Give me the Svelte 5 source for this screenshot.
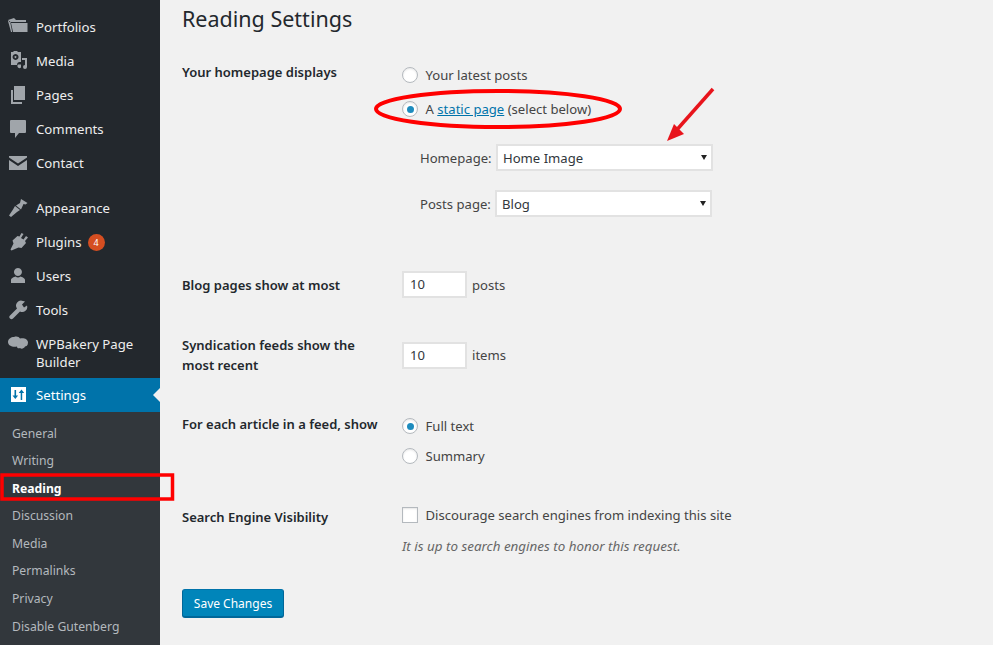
<script>
  const top = [
    { label: 'Portfolios', icon: 'folder' },
    { label: 'Media', icon: 'media' },
    { label: 'Pages', icon: 'pages' },
    { label: 'Comments', icon: 'comment' },
    { label: 'Contact', icon: 'mail' }
  ];
  const second = [
    { label: 'Appearance', icon: 'brush' },
    { label: 'Plugins', icon: 'plug', badge: '4' },
    { label: 'Users', icon: 'user' },
    { label: 'Tools', icon: 'wrench' }
  ];
  const paths = {
    folder: 'M0 3 L6 1 L8 3 H18 V5 H3 L2.5 6 Z M3 6 H19.5 V15 H5 Z M0 4 L2 4 L4 14 L4 15 L3 15 Z',
    media: 'M3 1 h2 l1 -1 h3 l1 1 h3 v10 h-2 a3 3 0 0 0 -2 3 h-6 z M7.5 3 a3 3 0 1 0 0.1 0 z M7.5 5 a1 1 0 1 1 -0.1 0 z M14 7 h5 v9 a2 2 0 1 1 -2 -2 v-5 h-3 z M10 13.5 h3 v3 a2 2 0 1 1 -3 -3 z',
    pages: 'M6 1 h11 v14 h-11 z M3 5 h2 v12 h9 v2 h-11 z',
    comment: 'M3 1 h14 a1 1 0 0 1 1 1 v11 a1 1 0 0 1 -1 1 h-6 l-4 5 v-5 h-4 a1 1 0 0 1 -1 -1 v-11 a1 1 0 0 1 1 -1 z',
    mail: 'M1 3 h18 v1.5 l-9 6 l-9 -6 z M1 7 l9 6 l9 -6 v10 h-18 z',
    brush: 'M13 1 l6.5 4 l-2 1.5 l-2 -.5 l-2.5 5.5 l-5 -4 l4 -2.5 z M7 8 l5 4 l-3 2 l-6 5 l-2 -1.5 l4 -6 z',
    plug: 'M13.5 1 l2 1 l-2.5 4 l2.5 1.5 l2.5 -3.5 l2 1.5 l-3 3.5 l1 2 l-4.5 5 l-3 -.5 l-7 3 l-1 -1 l3 -6 l-1 -3 l5 -4.5 l2 .5 z',
    user: 'M10 2 a4 4 0 1 1 -0.1 0 z M3 17 v-3 c0 -2 3 -3 4.5 -3.5 a4 4 0 0 0 5 0 c1.5 .5 4.5 1.5 4.5 3.5 v3 z',
    wrench: 'M15 1 a5 5 0 0 1 2 0.5 l-3 3 l2 3 l3 -2 a5 5 0 0 1 -7 6 l-7 7 a2 2 0 0 1 -3 -3 l7 -7 a5 5 0 0 1 6 -7.5 z'
  };
  const sub = ['General', 'Writing', 'Reading', 'Discussion', 'Media', 'Permalinks', 'Privacy', 'Disable Gutenberg'];
</script>

{#snippet item(entry)}
  <li class="item">
    <svg class="ico" viewBox="0 0 20 20"><path fill-rule="evenodd" d={paths[entry.icon]} /></svg>
    <span>{entry.label}</span>
    {#if entry.badge}<b class="badge">{entry.badge}</b>{/if}
  </li>
{/snippet}

<div class="page">
  <nav class="side">
    <ul class="menu">
      {#each top as entry}{@render item(entry)}{/each}
    </ul>
    <ul class="menu second">
      {#each second as entry}{@render item(entry)}{/each}
      <li class="item tall">
        <svg class="ico cloud" viewBox="0 0 20 20"><path d="M6 3 c3 -1 5 0 6 1.5 c3 -1 8 0 8 4 c0 3 -2 4 -3 4 c-1 2 -3.5 3 -5 1.500 c-1 .5 -3 .5 -3 -1.500 c-4 1 -9 -.5 -9 -4.500 c0 -3 3 -5 6 -5 z" /></svg>
        <span>WPBakery Page Builder</span>
      </li>
      <li class="item current">
        <svg class="ico" viewBox="0 0 20 20"><path fill-rule="evenodd" d="M3 2 h15 v15 h-15 z M6.500 5 v5.500 h-2 l2.800 3.500 l2.800 -3.500 h-2 v-5.500 z M13.500 4.500 l-2.800 3.500 h2 v7 h1.500 v-7 h2 z" /></svg>
        <span>Settings</span>
        <i class="notch"></i>
      </li>
    </ul>
    <ul class="submenu">
      {#each sub as s}
        <li class:on={s === 'Reading'}>{s}</li>
      {/each}
    </ul>
  </nav>

  <main class="main">
    <h1>Reading Settings</h1>

    <section class="row r1">
      <div class="th">Your homepage displays</div>
      <div class="td">
        <label class="opt"><i class="radio"></i>Your latest posts</label>
        <label class="opt second-opt"><i class="radio sel"></i>A&nbsp;<a href="#top">static page</a>&nbsp;(select below)</label>
        <div class="pick p1"><span>Homepage:</span><div class="select"><span>Home Image</span><i class="caret"></i></div></div>
        <div class="pick p2"><span>Posts page:</span><div class="select"><span>Blog</span><i class="caret"></i></div></div>
      </div>
    </section>

    <section class="row r2">
      <div class="th">Blog pages show at most</div>
      <div class="td inline"><div class="num">10</div><span>posts</span></div>
    </section>

    <section class="row r3">
      <div class="th">Syndication feeds show the most recent</div>
      <div class="td inline"><div class="num">10</div><span>items</span></div>
    </section>

    <section class="row r4">
      <div class="th">For each article in a feed, show</div>
      <div class="td">
        <label class="opt"><i class="radio sel"></i>Full text</label>
        <label class="opt summary"><i class="radio"></i>Summary</label>
      </div>
    </section>

    <section class="row r5">
      <div class="th">Search Engine Visibility</div>
      <div class="td">
        <label class="opt short"><i class="check"></i>Discourage search engines from indexing this site</label>
        <p class="note">It is up to search engines to honor this request.</p>
      </div>
    </section>

    <button class="save">Save Changes</button>
  </main>

  <svg class="marks" viewBox="0 0 993 645" width="993" height="645">
    <ellipse cx="498" cy="109" rx="122" ry="18" fill="none" stroke="#f00" stroke-width="4" />
    <line x1="713" y1="89" x2="674" y2="133" stroke="#e8141c" stroke-width="3.5" />
    <polygon points="667,141 674,124 684,134" fill="#e8141c" />
    <rect x="2" y="475" width="170.5" height="24" fill="none" stroke="#f00" stroke-width="3.5" />
  </svg>
</div>

<style>
  :global(body) { margin: 0; background: #f1f1f1; }
  .page {
    position: relative;
    display: flex;
    width: 993px;
    height: 645px;
    overflow: hidden;
    font-family: "Noto Sans", "Open Sans", sans-serif;
    font-size: 13px;
    color: #444;
    background: #f1f1f1;
  }
  ul { list-style: none; margin: 0; padding: 0; }
  .side {
    width: 160px;
    flex: none;
    background: #23282d;
    padding-top: 10px;
    box-sizing: border-box;
    color: #eee;
    font-size: 13.2px;
  }
  .second { margin-top: 11px; }
  .item {
    position: relative;
    display: flex;
    align-items: center;
    height: 34px;
    padding-left: 36px;
    box-sizing: border-box;
  }
  .ico {
    position: absolute;
    left: 8px;
    top: 7px;
    width: 20px;
    height: 20px;
    fill: #a0a5aa;
  }
  .cloud { left: 8px; top: 7px; }
  .tall { height: 51px; line-height: 18px; padding-right: 12px; }
  .current { background: #0073aa; color: #fff; }
  .current .ico { fill: #fff; }
  .notch {
    position: absolute;
    right: 0;
    top: 10px;
    border: 7px solid transparent;
    border-right-color: #f1f1f1;
    border-left-width: 0;
  }
  .badge {
    width: 17px;
    height: 17px;
    margin-left: 6px;
    border-radius: 50%;
    background: #d54e21;
    color: #fff;
    font-size: 9px;
    font-weight: 400;
    line-height: 17px;
    text-align: center;
  }
  .submenu {
    background: #32373c;
    height: 240px;
    padding-top: 7.5px;
    box-sizing: border-box;
    color: #b4b9be;
    font-size: 12.2px;
  }
  .submenu li { height: 27.6px; line-height: 27.6px; padding-left: 12px; }
  .submenu .on { color: #fff; font-weight: 700; }

  .main { flex: 1; padding-left: 22px; color: #23282d; }
  h1 {
    margin: 4px 0 0;
    height: 33px;
    line-height: 30px;
    font-size: 21.5px;
    font-weight: 400;
    color: #23282d;
  }
  .row { display: flex; }
  .th { width: 220px; flex: none; font-weight: 600; line-height: 20px; padding-right: 20px; box-sizing: border-box; font-size: 13px; }
  .td { color: #444; font-size: 13.1px; }
  .opt { display: flex; align-items: center; height: 20px; white-space: nowrap; }
  .short { height: 16px; }
  .second-opt { margin-top: 14px; }
  .summary { margin-top: 10px; }
  a { color: #0073aa; }
  .radio {
    position: relative;
    width: 14px;
    height: 14px;
    margin: 0 7.5px 0 0;
    border: 1px solid #b4b9be;
    border-radius: 50%;
    background: #fff;
    box-shadow: inset 0 1px 2px rgba(0,0,0,.1);
    flex: none;
  }
  .radio.sel::after {
    content: "";
    position: absolute;
    left: 3.5px;
    top: 3.5px;
    width: 7px;
    height: 7px;
    border-radius: 50%;
    background: #1e8cbe;
  }
  .check {
    width: 14px;
    height: 14px;
    margin-right: 7.5px;
    border: 1px solid #b4b9be;
    background: #fff;
    box-shadow: inset 0 1px 2px rgba(0,0,0,.1);
    flex: none;
  }
  .pick { display: flex; align-items: center; gap: 5px; white-space: nowrap; }
  .p1 { margin: 25px 0 0 18px; }
  .p2 { margin: 19px 0 0 18px; }
  .p1 > span { width: 71px; }
  .p2 > span { width: 70px; }
  .select {
    position: relative;
    width: 208px;
    height: 23px;
    padding: 0 0 0 5px;
    display: flex;
    align-items: center;
    border: 2px solid #e2e2e2;
    background: #fff;
    color: #32373c;
  }
  .caret {
    position: absolute;
    right: 4px;
    top: 9px;
    border: 3.5px solid transparent;
    border-top: 5px solid #222;
    border-bottom: 0;
  }
  .inline { display: flex; align-items: center; gap: 5px; height: 27px; }
  .num {
    width: 55px;
    height: 23px;
    padding-left: 6px;
    line-height: 23px;
    border: 2px solid #e2e2e2;
    background: #fff;
    color: #32373c;
  }
  .r1 { margin-top: 25px; }
  .r1 .td { padding-top: 3px; }
  .r2 { margin-top: 54px; }
  .r2 .th { padding-top: 4px; }
  .r3 { margin-top: 37px; align-items: center; }
  .r4 { margin-top: 39px; }
  .r4 .td { padding-top: 2px; }
  .r5 { margin-top: 41px; }
  .note { margin: 13px 0 0; font-style: italic; font-size: 13.4px; color: #666; line-height: 20px; }
  .save {
    display: block;
    margin-top: 33px;
    width: 102px;
    height: 29px;
    padding: 0;
    font: inherit;
    font-size: 12px;
    color: #fff;
    background: #0085ba;
    border: 1px solid #006799;
    border-top-color: #0073aa;
    border-bottom-width: 2px;
    border-radius: 3px;
  }
  .marks { position: absolute; left: 0; top: 0; pointer-events: none; }
</style>
